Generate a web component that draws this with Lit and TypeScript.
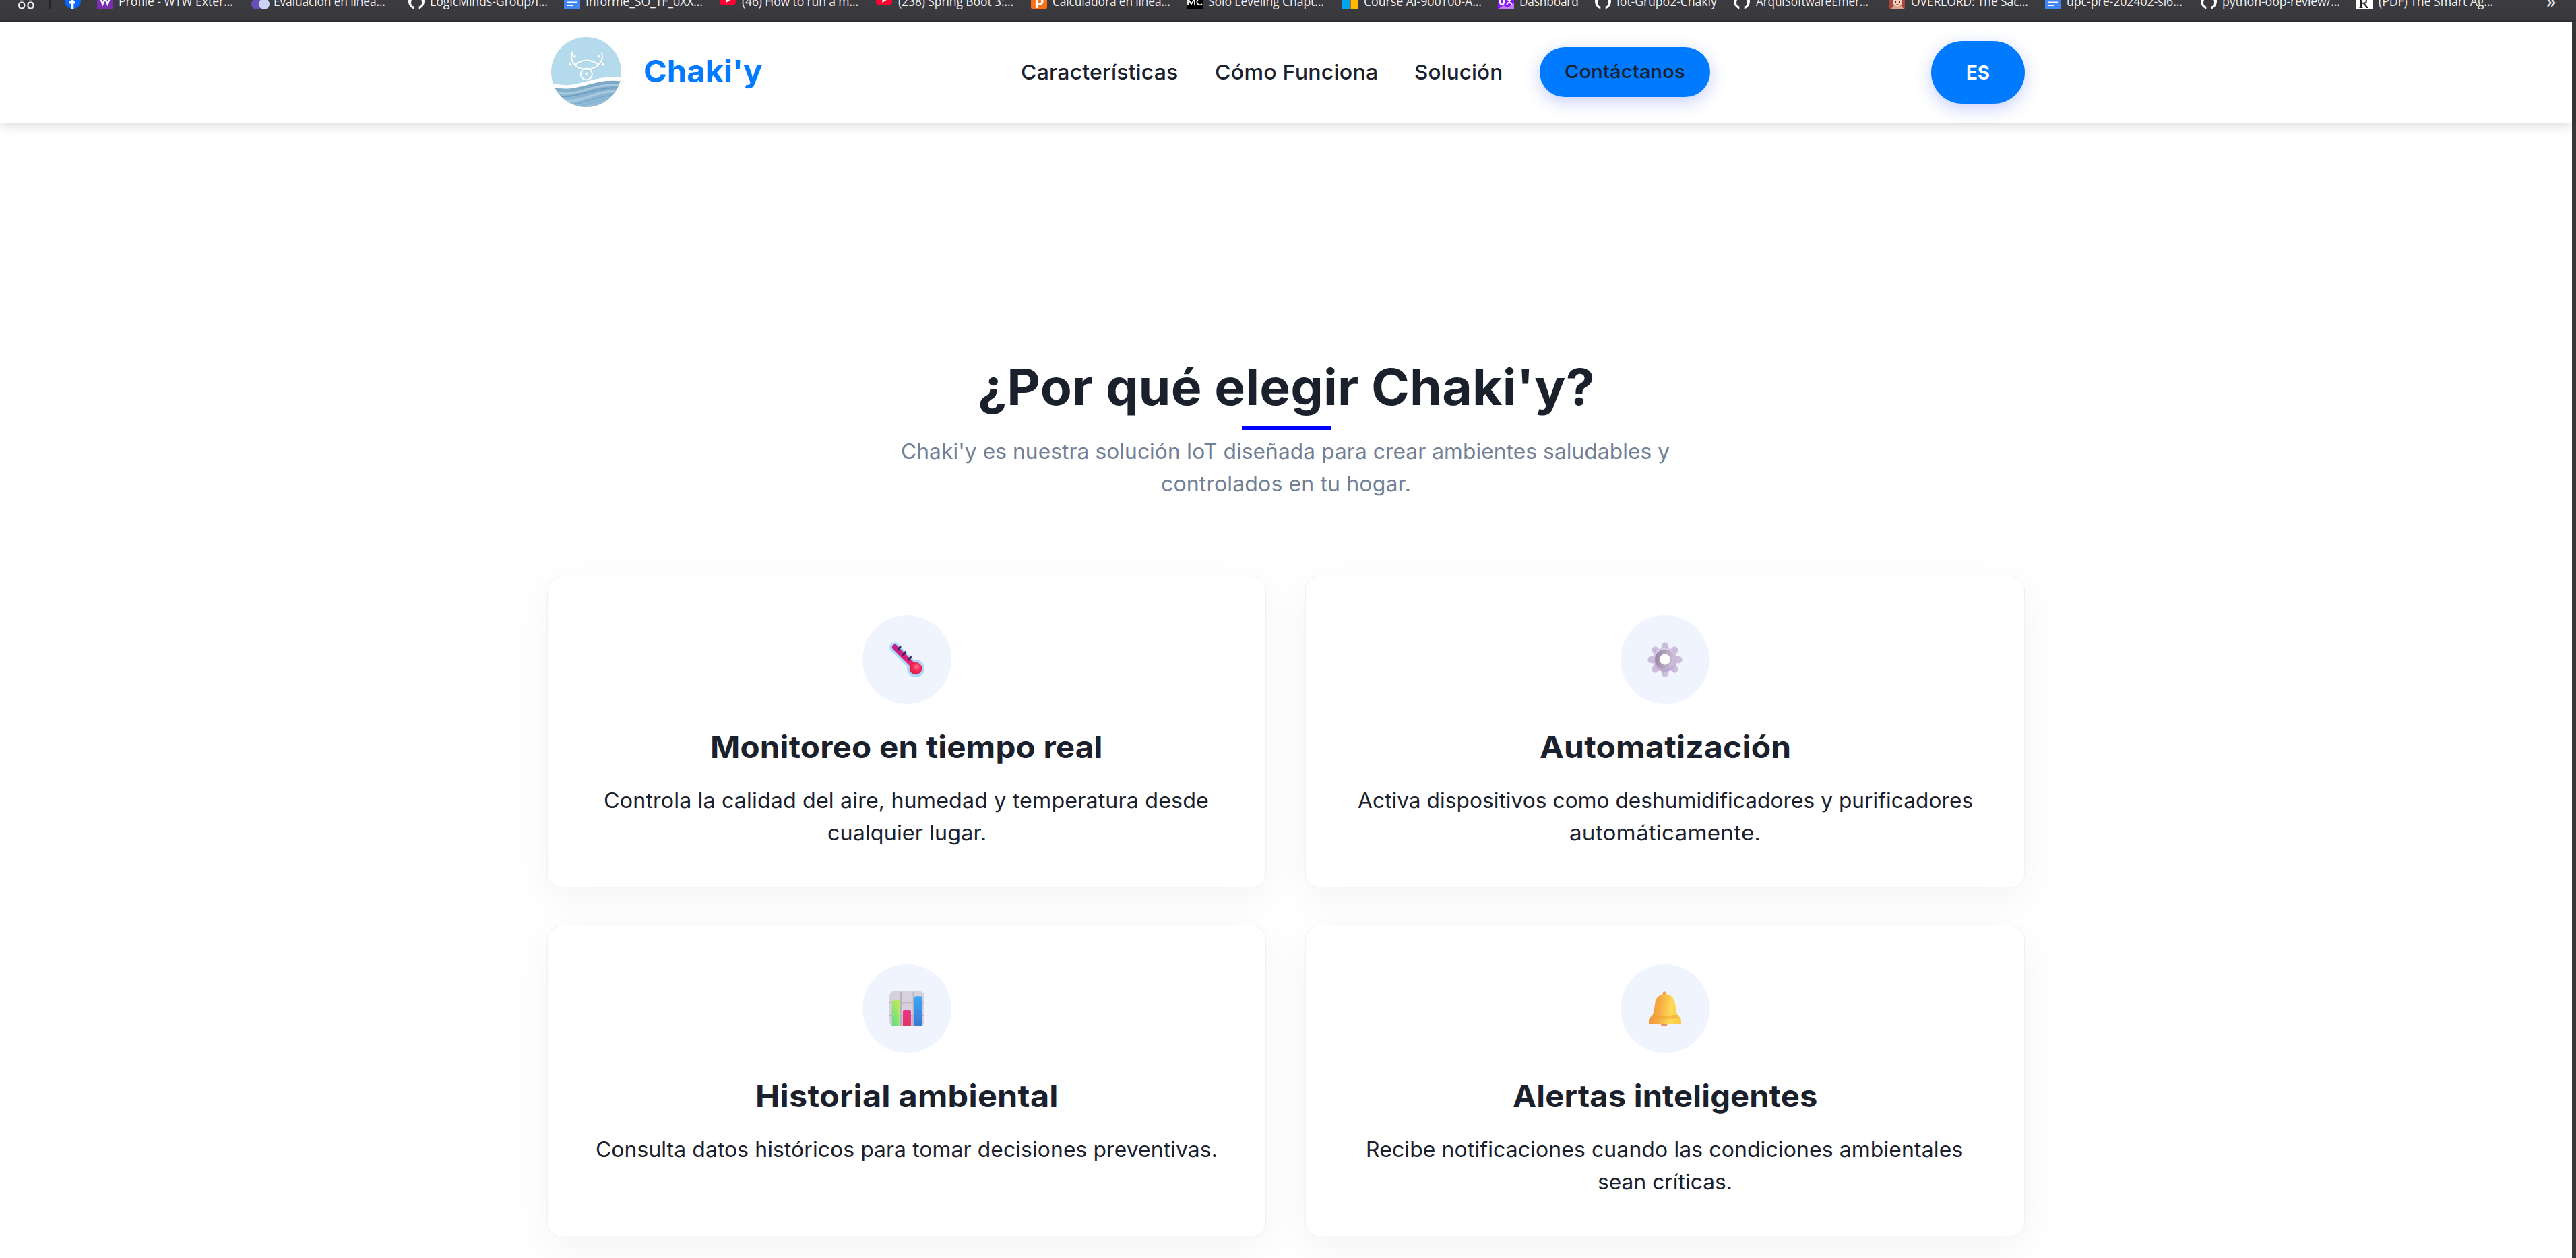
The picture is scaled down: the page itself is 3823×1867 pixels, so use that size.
import { LitElement, html, css, svg, TemplateResult } from "lit";
import { customElement, property } from "lit/decorators.js";

/** One line of text whose ink is widened or narrowed to an exact width. */
@customElement("fit-line")
export class FitLine extends LitElement {
  @property() text = "";
  @property({ type: Number }) w = 100;
  static styles = css`
    :host { display: block; white-space: nowrap; flex: none; }
    .t { display: inline-block; vertical-align: top; white-space: pre; transform-origin: 0 50%; }
  `;
  render() {
    return html`<span class="t">${this.text}</span>`;
  }
  updated() {
    const span = this.renderRoot.querySelector(".t") as HTMLElement;
    const cs = getComputedStyle(this);
    const ctx = document.createElement("canvas").getContext("2d")!;
    ctx.font = `${cs.fontWeight} ${cs.fontSize} ${cs.fontFamily}`;
    const m = ctx.measureText(this.text);
    const ink = m.actualBoundingBoxLeft + m.actualBoundingBoxRight;
    // Most of the difference goes into glyph width, the rest into tracking.
    const track = ((this.w - ink) * 0.12) / (this.text.length - 1);
    const scale = this.w / (ink + track * (this.text.length - 1));
    this.style.width = this.w + "px";
    span.style.letterSpacing = track + "px";
    span.style.transform = `scaleX(${scale})`;
    span.style.marginLeft = m.actualBoundingBoxLeft * scale + "px";
    span.style.marginRight = "-200px";
  }
}

const github = svg`<circle cx="12" cy="12" r="12" fill="#fff"/><path d="M8.3 24v-4.4C4.5 19 3.6 15.600 4.300 12c.3-1.600.9-2.600 1.600-3.400C5.500 7 5.700 5.500 6.200 4.600c1.600.1 2.800.9 3.700 1.600a13 13 0 0 1 4.400 0c1-.7 2.100-1.500 3.700-1.600.5.9.7 2.400.3 4 .8.8 1.400 1.800 1.600 3.400.6 3.600-.3 7-4.200 7.600V24z" fill="#3b3a3f"/>`;
const docs = svg`<rect width="24" height="24" rx="1" fill="#4285f4"/><path d="M5 9h14M5 13.500h14M5 18h9" stroke="#fff" stroke-width="2.200"/>`;
const youtube = svg`<rect y="-2" width="24" height="20" rx="5" fill="#ff0033"/><path d="M9.500 5v9l7-4.500z" fill="#fff"/>`;

const marks: { icon: TemplateResult; label: string; w: number }[] = [
  { icon: svg`<rect width="24" height="24" rx="1" fill="#7b2fb0"/><path d="M5 7l3.300 9L12 8l3.700 8L19 7" stroke="#fff" stroke-width="2.600" fill="none"/>`, label: "Profile - WTW Exter...", w: 168 },
  { icon: svg`<circle cx="7" cy="16" r="8" fill="#6750b5"/><circle cx="18" cy="16" r="8" fill="#ccd3f5"/>`, label: "Evaluación en línea...", w: 164 },
  { icon: github, label: "LogicMinds-Group/I...", w: 173 },
  { icon: docs, label: "Informe_SO_TF_0XX...", w: 172 },
  { icon: youtube, label: "(46) How to run a m...", w: 172 },
  { icon: youtube, label: "(238) Spring Boot 3:...", w: 170 },
  { icon: svg`<rect width="24" height="24" rx="4" fill="#f97316"/><path d="M8.500 22V8h4.500a4 4 0 0 1 0 8h-4" stroke="#fff" stroke-width="3.200" fill="none"/>`, label: "Calculadora en línea...", w: 173 },
  { icon: svg`<rect width="24" height="24" fill="#000"/><path d="M2 17V8l5 8 5-8v9M23 9.500a4.500 4.500 0 1 0 0 6.500" stroke="#fff" stroke-width="1.800" fill="none"/>`, label: "Solo Leveling Chapt...", w: 170 },
  { icon: svg`<path d="M0-6h11.500V5.500H0z" fill="#f25022"/><path d="M12.500-6H24V5.500H12.500z" fill="#7fba00"/><path d="M0 6.500h11.500V24H0z" fill="#00a4ef"/><path d="M12.500 6.500H24V24H12.500z" fill="#ffb900"/>`, label: "Course AI-900T00-A...", w: 173 },
  { icon: svg`<rect width="24" height="24" fill="#8a17ff"/><path d="M0 24L8 18l7 3 9-6v9z" fill="#c07cf5"/><path d="M3 7v6.500a3 3 0 0 0 6 0V7M13 7l8 10M21 7l-8 10" stroke="#fff" stroke-width="2" fill="none"/>`, label: "Dashboard", w: 86 },
  { icon: github, label: "Iot-Grupo2-Chakiy", w: 148 },
  { icon: github, label: "ArquiSoftwareEmer...", w: 166 },
  { icon: svg`<rect width="23" height="24" rx="3" fill="#a8473c"/><circle cx="12" cy="13" r="7" fill="#f5cdb8"/><path d="M2 24l5-6 5 3 5-3 5 6z" fill="#d9a58c"/><path d="M8 13h2M14 13h2" stroke="#532a2a" stroke-width="2"/><path d="M10.500 17h3" stroke="#c43b3b" stroke-width="2"/>`, label: "OVERLORD: The Sac...", w: 172 },
  { icon: docs, label: "upc-pre-202402-si6...", w: 170 },
  { icon: github, label: "python-oop-review/...", w: 173 },
  { icon: svg`<rect width="24" height="24" fill="#fff"/><path d="M7 21V8h4.500a3.300 3.300 0 0 1 0 6.800H7M11 15l5 6M4.500 21h5M14 21h4" stroke="#222" stroke-width="2" fill="none"/><path d="M18 5h3v4h-3z" fill="#222"/>`, label: "(PDF) The Smart Ag...", w: 169 },
];

const thermometer = svg`
  <defs><linearGradient id="tb" x1="0" y1="0" x2="1" y2="1"><stop offset="0" stop-color="#c21f86"/><stop offset="1" stop-color="#f3206a"/></linearGradient>
  <radialGradient id="tr" cx=".58" cy=".38" r=".7"><stop offset="0" stop-color="#ff8196"/><stop offset=".4" stop-color="#fb2b58"/><stop offset="1" stop-color="#cf1845"/></radialGradient></defs>
  <path d="M22 22L110 112" stroke="#a9dafd" stroke-width="43" stroke-linecap="round"/>
  <circle cx="117" cy="117" r="39" fill="#a9dafd"/>
  <path d="M24 22L112 110" stroke="url(#tb)" stroke-width="24" stroke-linecap="round"/>
  <circle cx="117" cy="117" r="28" fill="url(#tr)"/>
  <path d="M39 33L48 21M61 56L71 44M85 79L95 67" stroke="#35265c" stroke-width="9" stroke-linecap="round"/>`;

const gear = svg`
  <defs><linearGradient id="gt" x1="0" y1="0" x2="0" y2="1"><stop offset="0" stop-color="#d9d0e3"/><stop offset="1" stop-color="#bda4d4"/></linearGradient>
  <linearGradient id="gr" x1="0" y1=".3" x2="1" y2=".5"><stop offset="0" stop-color="#9c8ba9"/><stop offset="1" stop-color="#cbbcd6"/></linearGradient></defs>
  <path d="M78 17V139M17 78H139M35 35L121 121M121 35L35 121" stroke="#cdbedd" stroke-width="32" stroke-linecap="round"/>
  <circle cx="78" cy="78" r="54" fill="url(#gt)"/>
  <path d="M28 24L39 45M64 24h28M112 42l10-8M20 70v12M122 68l14 2M110 118l7 12M66 126l8 18" stroke="#b7a4c8" stroke-width="2" stroke-linecap="round"/>
  <circle cx="78" cy="77" r="34.500" fill="none" stroke="url(#gr)" stroke-width="21"/>
  <circle cx="78" cy="77" r="25" fill="#fff" stroke="#a99bb5" stroke-width="2"/>`;

const chart = svg`
  <defs><linearGradient id="c1" x1="0" y1="1" x2=".5" y2="0"><stop offset="0" stop-color="#62dc8c"/><stop offset="1" stop-color="#b9e757"/></linearGradient>
  <linearGradient id="c2" x1="0" y1="0" x2="0" y2="1"><stop offset="0" stop-color="#ea338c"/><stop offset="1" stop-color="#e23560"/></linearGradient>
  <linearGradient id="c3" x1="0" y1="0" x2="0" y2="1"><stop offset="0" stop-color="#3aa9f8"/><stop offset="1" stop-color="#3979cf"/></linearGradient></defs>
  <rect width="156" height="156" rx="20" fill="#d7d0df"/>
  <path d="M51 2V156M107 2V156M0 52H156M0 108H156" stroke="#b8b2bf" stroke-width="6"/>
  <path d="M47 156v-50h12v50zM97 156v-50h13v50z" fill="#b89ad0" opacity=".5"/>
  <path d="M11 156V46q0-6 6-6h25q6 0 6 6V156z" fill="url(#c1)"/>
  <path d="M60 156V90q0-6 6-6h24q6 0 6 6v66z" fill="url(#c2)"/>
  <path d="M111 156V28q0-6 6-6h23q5 0 5 6v128z" fill="url(#c3)"/>
  <path d="M43 46V156" stroke="#b5f07a" stroke-width="4" opacity=".6"/><path d="M92 90v66" stroke="#ff6a94" stroke-width="4" opacity=".6"/>`;

const bell = svg`
  <defs><linearGradient id="b1" x1="0" y1=".4" x2="1" y2=".5"><stop offset="0" stop-color="#ed9242"/><stop offset=".35" stop-color="#f6ad42"/><stop offset=".7" stop-color="#fedb57"/><stop offset="1" stop-color="#fbc843"/></linearGradient></defs>
  <circle cx="74" cy="138" r="18" fill="#f08a5c"/>
  <rect x="68" y="1" width="14" height="24" rx="7" fill="#f0a03c"/>
  <path d="M78 13C48 13 36 33 34 54L28 92C25 112 6 112 6 134v8q0 3 3 3H147q3 0 3-3v-8C150 112 132 112 129 92L123 54C120 33 108 13 78 13z" fill="url(#b1)"/>
  <path d="M24 106Q78 118 132 106Q136 112 143 118Q78 128 14 118Q20 112 24 106z" fill="#ee9a2e" opacity=".45"/>`;

const cards = [
  { icon: thermometer, title: "Monitoreo en tiempo real", tw: 578, lines: [{ t: "Controla la calidad del aire, humedad y temperatura desde", w: 896 }, { t: "cualquier lugar.", w: 233 }] },
  { icon: gear, title: "Automatización", tw: 370, lines: [{ t: "Activa dispositivos como deshumidificadores y purificadores", w: 912 }, { t: "automáticamente.", w: 281 }] },
  { icon: chart, title: "Historial ambiental", tw: 445, lines: [{ t: "Consulta datos históricos para tomar decisiones preventivas.", w: 920 }] },
  { icon: bell, title: "Alertas inteligentes", tw: 450, lines: [{ t: "Recibe notificaciones cuando las condiciones ambientales", w: 883 }, { t: "sean críticas.", w: 197 }] },
];

@customElement("app-root")
export class AppRoot extends LitElement {
  static styles = css`
    * { box-sizing: border-box; }
    :host {
      display: flex; flex-direction: column; width: 3823px; height: 1867px; overflow: hidden;
      background: #fff; color: #1a202c; font-family: Inter, "Liberation Sans", sans-serif;
    }
    svg { display: block; flex: none; }
    .bookmarks {
      height: 32px; flex: none; background: #3b3a3f; border-bottom: 2px solid #323036; color: #f1f1f3;
      display: grid; align-items: start; overflow: hidden; padding-left: 27px;
      grid-template-columns: 46px 23px 48px 230px 232px 231px 231px 232px 230px 231px 231px 231px 144px 206px 231px 231px 231px 231px 282px 20px;
      font: 400 19.800px/27px "Open Sans", "Noto Sans", sans-serif;
    }
    .mark { display: flex; gap: 9px; height: 27px; margin-top: -12px; align-items: center; }
    .mark svg { overflow: visible; }
    .sep { width: 2px; height: 13px; background: #25242a; }
    .grid { margin-top: -10px; }
    .fb { margin-top: -11px; }
    .more { margin-top: -13px; font-size: 29px; }
    .view { flex: 1; display: flex; min-height: 0; }
    .page { width: 3817px; display: flex; flex-direction: column; }
    .edge { width: 6px; background: #38373c; }
    .header {
      height: 150px; flex: none; background: #fff; display: flex; align-items: center;
      padding: 0 812px 0 818px; box-shadow: 0 3px 17px rgba(0, 0, 0, .17); position: relative;
    }
    .brand { color: #007bff; font-size: 45px; font-weight: 700; line-height: 60px; margin: -2px 0 0 35px; }
    .nav { display: flex; align-items: center; gap: 57px; margin-left: 385px; font-size: 30px; font-weight: 500; line-height: 40px; }
    .cta {
      width: 253px; height: 74px; border-radius: 37px; background: #007bff; display: flex; align-items: center;
      justify-content: center; font-size: 27px; box-shadow: 0 7px 25px rgba(67, 97, 238, .3);
    }
    .lang {
      width: 139px; height: 93px; border-radius: 46.500px; margin-left: auto; background: #007bff; color: #fff;
      display: flex; align-items: center; justify-content: center; font-size: 29px; font-weight: 700;
      box-shadow: 0 7px 25px rgba(67, 97, 238, .3);
    }
    .main { display: flex; flex-direction: column; align-items: center; padding-top: 347px; }
    .title { font-size: 74px; font-weight: 700; line-height: 90px; }
    .rule { width: 132px; height: 6px; background: #00f; margin: 13px 0 8px; }
    .sub { color: #718096; font-size: 30.500px; line-height: 48px; display: flex; flex-direction: column; align-items: center; }
    .cards { display: grid; grid-template-columns: 1067px 1068px; gap: 57px 58px; margin-top: 114px; }
    .card {
      height: 461px; border: 1px solid #f1f1f1; border-radius: 20px; background: #fff; padding-top: 56px;
      display: flex; flex-direction: column; align-items: center; box-shadow: 0 16px 60px rgba(0, 0, 0, .05);
    }
    .disc { width: 132px; height: 132px; border-radius: 50%; background: #f0f4ff; display: flex; align-items: center; justify-content: center; }
    .head { font-size: 45px; font-weight: 700; line-height: 70px; margin: 29px 0 20px; }
    .desc { font-size: 30.500px; line-height: 48px; display: flex; flex-direction: column; align-items: center; }
  `;

  render() {
    return html`
      <div class="bookmarks">
        <svg class="grid" width="24" height="24" viewBox="0 0 24 24" fill="none" stroke="#eee" stroke-width="2.200"><rect x="1.200" y="1.200" width="8" height="8" rx="3"/><rect x="14.500" y="1.200" width="8" height="8" rx="3"/><rect x="1.200" y="13.500" width="8" height="9" rx="3.500"/><rect x="14.500" y="13.500" width="8" height="9" rx="3.500"/></svg>
        <span class="sep"></span>
        <svg class="fb" width="24" height="24" viewBox="0 0 24 24"><circle cx="12" cy="12" r="12" fill="#0866ff"/><path d="M10 24v-7.500H7V13h3v-2.500C10 7 12 5.500 16 6v3c-2 0-2.700.3-2.700 2v2H16l-.6 3.500h-2.100V24z" fill="#fff"/></svg>
        ${marks.map((m) => html`<div class="mark"><svg width="24" height="24" viewBox="0 0 24 24">${m.icon}</svg><fit-line .text=${m.label} .w=${m.w}></fit-line></div>`)}
        <span class="more">»</span>
      </div>
      <div class="view">
        <div class="page">
          <div class="header">
            <svg width="104" height="104" viewBox="114 105 312 312">
              <defs><clipPath id="disc"><circle cx="270" cy="261" r="156"/></clipPath>
              <linearGradient id="sea" x1="0" y1="0" x2="0" y2="1"><stop offset="0" stop-color="#77a5c3"/><stop offset="1" stop-color="#98bfdb"/></linearGradient></defs>
              <g clip-path="url(#disc)" fill="none">
                <rect x="114" y="105" width="312" height="312" fill="#b4daec"/>
                <path d="M110 322C230 352 285 285 430 296V420H110z" fill="url(#sea)"/>
                <path d="M120 350C235 380 285 305 430 321" stroke="#a6c9e0" stroke-width="10"/>
                <path d="M150 368C245 378 310 322 430 332" stroke="#6c9cbd" stroke-width="5"/>
                <path d="M165 386C255 404 310 335 430 348" stroke="#a6c9e0" stroke-width="11"/>
                <path d="M185 404C270 408 320 358 430 362" stroke="#7ba9c8" stroke-width="5"/>
                <path d="M225 414C290 408 330 375 420 380" stroke="#88b3d0" stroke-width="5"/>
                <path d="M110 317C235 353 290 276 430 294" stroke="#fff" stroke-width="16"/>
                <g stroke="#8fbfd6" stroke-width="8" opacity=".5" stroke-linecap="round"><path d="M209 175C193 218 226 252 271 252S352 218 339 176M222 229Q271 192 326 230"/><circle cx="271" cy="272" r="25"/></g>
                <g stroke="#fff" stroke-width="6.500" stroke-linecap="round"><path d="M209 173C193 216 226 249 271 249S352 216 339 174M222 227Q271 190 326 228"/><circle cx="271" cy="270" r="25.500"/></g>
                <g fill="#fff"><circle cx="271" cy="268" r="5.500"/><circle cx="219" cy="191" r="5.500"/><circle cx="325" cy="191" r="5.500"/><circle cx="200" cy="227" r="5.500"/><circle cx="343" cy="227" r="5.500"/></g>
              </g>
            </svg>
            <fit-line class="brand" .text=${"Chaki'y"} .w=${174}></fit-line>
            <div class="nav">
              <fit-line .text=${"Características"} .w=${231}></fit-line>
              <fit-line .text=${"Cómo Funciona"} .w=${239}></fit-line>
              <fit-line .text=${"Solución"} .w=${128}></fit-line>
              <div class="cta"><fit-line .text=${"Contáctanos"} .w=${177}></fit-line></div>
            </div>
            <div class="lang"><fit-line .text=${"ES"} .w=${33}></fit-line></div>
          </div>
          <div class="main">
            <fit-line class="title" .text=${"¿Por qué elegir Chaki'y?"} .w=${909}></fit-line>
            <div class="rule"></div>
            <div class="sub">
              <fit-line .text=${"Chaki'y es nuestra solución IoT diseñada para crear ambientes saludables y"} .w=${1140}></fit-line>
              <fit-line .text=${"controlados en tu hogar."} .w=${368}></fit-line>
            </div>
            <div class="cards">
              ${cards.map((c) => html`
                <div class="card">
                  <div class="disc"><svg width="52" height="52" viewBox="0 0 156 156">${c.icon}</svg></div>
                  <fit-line class="head" .text=${c.title} .w=${c.tw}></fit-line>
                  <div class="desc">${c.lines.map((l) => html`<fit-line .text=${l.t} .w=${l.w}></fit-line>`)}</div>
                </div>`)}
            </div>
          </div>
        </div>
        <div class="edge"></div>
      </div>`;
  }
}
